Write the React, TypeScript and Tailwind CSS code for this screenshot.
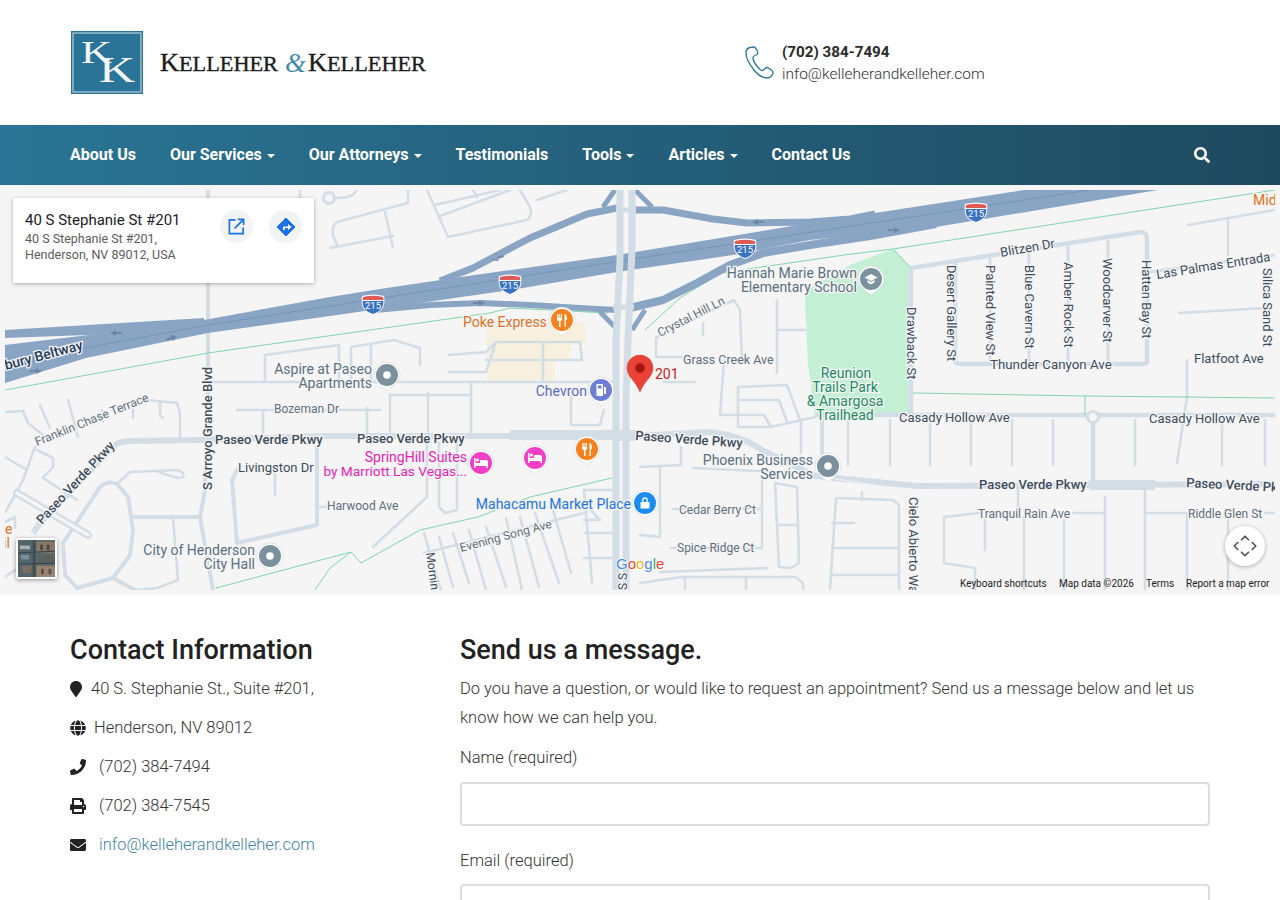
import { ChevronDown, ChevronLeft, ChevronRight, ChevronUp } from 'lucide-react'
import { FaEnvelope, FaGlobe, FaMapMarker, FaPhone, FaPrint, FaSearch } from 'react-icons/fa'

const navItems = [
  { label: 'About Us' },
  { label: 'Our Services', caret: true },
  { label: 'Our Attorneys', caret: true },
  { label: 'Testimonials' },
  { label: 'Tools', caret: true },
  { label: 'Articles', caret: true },
  { label: 'Contact Us' },
]

// minor streets, in page coordinates
const streets = [
  // west of S Arroyo Grande
  'M5 412 L23 411 L28 423 L43 435 M40 405 L50 428 M68 400 L78 437 M102 410 L103 422 M133 403 V418 M147 400 L177 403 L180 413 V438 M160 403 V415 L163 418',
  'M5 457 L27 470 M35 447 L23 480 L5 513 M37 450 L53 458 V467 L43 478 L77 500 M5 522 L15 517 V528',
  'M118 483 L130 472 L177 470 Q185 472 183 477 Q178 480 157 471 M5 577 L15 570',
  'M173 517 L178 580 L157 588 L135 590',
  'M275 473 V495 M317 507 H325',
  // Bozeman and north of Paseo
  'M237 410 H380 M263 410 V433 M367 408 V433',
  'M212 382 H437 L443 382 H612 M265 382 V355 L339 345 V380 M351 380 V347 L394 340 L420 348 V365 M371 345 V380',
  'M449 372 H486 L496 342 H580 L582 360 H486 M449 355 L486 352 L496 342 M543 343 V380',
  'M390 432 V395 H471 M428 393 V433 M471 383 V433',
  'M571 397 V425 H600 L604 410',
  // south of Paseo
  'M427 443 V497 L373 547 M439 443 V507 L445 513 L457 510 V443',
  'M424 553 L584 513 M424 533 L441 590 M439 537 L453 587 M453 533 L469 583 M469 530 L486 590 M486 527 L506 587 M506 518 L522 590 M520 517 L539 587 M535 513 L559 583 M553 510 L571 573 M584 490 L592 583 M584 490 H612 M584 503 L600 520 H584 M585 533 H612 M584 558 H612',
  // north of the highway, top of page
  'M408 190 V203 L337 222 Q332 225 333 235 L337 245 M330 248 L393 236 M385 212 L393 247',
  'M427 190 L448 237 L527 220 Q533 215 530 207 L520 190 M435 205 L500 190 M440 216 L510 190 M473 190 L477 197 M537 200 L567 190 M336 198 C345 198 355 197 356 190 M300 190 L300 225 M225 262 L232 245',
  // east of S Stephanie
  'M656 338 L660 335 L730 302 L734 300 L740 310 L742 360 M656 338 V357 H683 M703 323 V335 M777 300 V373 M777 330 H805 M664 382 H695',
  'M724 360 L720 415 H764 L771 427 L815 417 M738 387 L787 385 L801 423 M738 387 V427 H771 M738 400 H779 L787 422 M801 423 V453',
  'M681 447 V465 L640 467 M693 468 L803 473 M660 467 V537 L640 535 M762 480 V548 H671 M673 509 H762',
  'M775 483 L797 487 L799 563 L791 568 L779 567 Z M777 525 H798',
  'M862 492 V500 M836 498 L893 500 L899 505 V590 M836 498 L830 590 M832 523 H854 M832 548 H899 M832 575 H899',
  'M660 572 L767 568 M640 583 L681 577 H795 L803 583 V590 M685 578 V590 M746 578 V590',
  // residential, east
  'M1018 488 V510 M944 517 L979 513 M944 517 V563 L975 568 V590 M985 520 V550 M1024 517 V590 M1064 520 V590 M1073 513 H1105 M1105 497 V590 M1145 490 V590 M1145 513 H1187 V590 M1228 520 V590 M1265 513 H1275',
  'M848 420 V465 M890 420 V465 M930 420 V465 M971 420 V465 M1012 420 V465 M1053 420 V465 M1135 420 V465 M1222 420 V465 M1265 420 V465',
  'M1187 360 V397 L1177 463 M1179 313 L1265 308 M1188 225 L1275 210 M1228 218 V255',
]

// a few carry more weight
const mainStreets = [
  'M77 588 L65 575 L63 543 L100 487 Q108 480 117 484 L128 497 L133 530 L130 555 L113 578 L77 588 M113 578 L135 590 M133 517 H200',
  'M237 470 L232 480 L237 543 L317 525 V447',
  'M822 420 V453',
  'M208 190 V400 L205 490 L200 517 L213 590',
]

function Pin({ x, y, fill, children }: { x: number; y: number; fill: string; children?: React.ReactNode }) {
  return (
    <g transform={`translate(${x} ${y})`}>
      <path d="M-13 0 A13 13 0 0 1 13 0 C13 7 6 11 0 16 C-6 11 -13 7 -13 0Z" fill="#fff" stroke="#d0d0d0" strokeWidth="0.6" />
      <circle r="11" fill={fill} />
      {children}
    </g>
  )
}

const Fork = () => (
  <path d="M-5 -6 V-1 C-5 1 -3 1 -3 1 V7 H-1.5 V1 C-1.5 1 0 1 0 -1 V-6 H-1 V-2 H-1.7 V-6 H-2.6 V-2 H-3.4 V-6 H-4.2 V-2 H-4.4 V-6Z M2.5 -6 C4.5 -6 5 -3 5 0 H3.8 V7 H2.5Z" fill="#fff" />
)
const Bed = () => (
  <path d="M-7 -5 H-5.5 V0 H-1 V-3 H5 A2 2 0 0 1 7 -1 V5 H5.5 V3 H-5.5 V5 H-7Z M-5 -3 A1.5 1.5 0 1 1 -2 -3 A1.5 1.5 0 1 1 -5 -3Z" fill="#fff" />
)
const Dot = () => <circle r="3.8" fill="#fff" />

function Shield({ x, y }: { x: number; y: number }) {
  return (
    <g transform={`translate(${x} ${y})`}>
      <path d="M-11 -9 Q0 -12 11 -9 C12 -2 12 6 0 10 C-12 6 -12 -2 -11 -9Z" fill="#fff" />
      <path d="M-10 -8 Q0 -10.5 10 -8 L10.3 -5 H-10.3Z" fill="#e05a5a" />
      <path d="M-10.3 -4 H10.3 C10.5 1 9 6 0 9 C-9 6 -10.5 1 -10.3 -4Z" fill="#3a72c4" />
      <text y="4" textAnchor="middle" fontSize="9.5" fill="#fff">215</text>
    </g>
  )
}

type LabelProps = {
  x: number
  y: number
  t: string
  c?: string
  s?: number
  r?: number
  a?: 'start' | 'middle' | 'end'
  w?: number
}

// map label with the usual halo round it
function L({ x, y, t, c = '#5f6f7d', s = 12.5, r = 0, a = 'start', w = 400 }: LabelProps) {
  return (
    <text
      x={x}
      y={y}
      fill={c}
      fontSize={s}
      fontWeight={w}
      textAnchor={a}
      stroke="#f5f5f5"
      strokeWidth="2.5"
      paintOrder="stroke"
      transform={r ? `rotate(${r} ${x} ${y})` : undefined}
    >
      {t}
    </text>
  )
}

function MapDrawing() {
  const road = '#d2dde6'
  const hwy = '#8aa5c4'
  const dark = '#3d4c5c'
  const poi = '#5a7080'
  return (
    <svg viewBox="5 190 1270 400" className="block h-full w-full">
      <rect x="5" y="190" width="1270" height="400" fill="#f5f5f5" />
      <path d="M893 249 L911 268 L911 415 L815 415 L808 365 L805 300 L807 290 L850 265Z" fill="#c3f0d4" />
      <path d="M487 322 H585 V345 H571 V360 H555 V381 H487Z" fill="#f8f0de" />

      <g fill="none" stroke={road} strokeWidth="2.6" strokeLinejoin="round" strokeLinecap="round">
        {streets.map((d, i) => (
          <path key={i} d={d} />
        ))}
      </g>
      <g fill="none" stroke={road} strokeWidth="4" strokeLinejoin="round" strokeLinecap="round">
        {mainStreets.map((d, i) => (
          <path key={i} d={d} />
        ))}
      </g>

      {/* slip road with a cul-de-sac end */}
      <path d="M17 493 L88 535" fill="none" stroke={road} strokeWidth="8" strokeLinecap="round" />
      <path d="M17 493 L88 535" fill="none" stroke="#f5f5f5" strokeWidth="3.5" strokeLinecap="round" />
      <circle cx="329" cy="198" r="5.5" fill="#f5f5f5" stroke={road} strokeWidth="3" />

      {/* wider roads */}
      <g fill="none" stroke={road} strokeWidth="4.5" strokeLinejoin="round">
        <path d="M911 268 V415 M815 415 H1275 M911 268 L1140 232 Q1147 232 1147 240 V362 Q1147 364 1140 364 H960 Q955 364 955 360 V262" />
        <path d="M990 258 V362 M1029 252 V362 M1068 246 V362 M1108 240 V362" strokeWidth="3" />
        <path d="M1093 415 V486" />
        <path d="M1150 272 L1275 255" strokeWidth="3" />
      </g>
      <circle cx="1093" cy="417" r="5.5" fill="#f5f5f5" stroke={road} strokeWidth="3" />
      <path d="M33 533 L40 523 L115 445 Q118 442 130 441 L200 440 L326 436 L636 436 L709 432 Q740 435 762 450 L815 476 L917 486 L1089 485 L1275 484" fill="none" stroke={road} strokeWidth="6" strokeLinejoin="round" />
      <path d="M510 435 H636 M1089 485 H1155" fill="none" stroke={road} strokeWidth="10" />
      <path d="M830 478 L900 489" fill="none" stroke="#f5f5f5" strokeWidth="1" />

      {/* green boundary lines */}
      <g fill="none" stroke="#82d4ab" strokeWidth="1">
        <path d="M5 390 L208 353 L490 313 L510 308 L608 313" />
        <path d="M645 330 L680 298 L721 273 L844 255 L893 249 L1275 190 M893 249 L911 268" />
        <path d="M216 588 L351 552 L361 563 L420 530 L478 517 L530 497 L612 478" />
        <path d="M913 393 L1085 396 L1275 398 M1085 396 V415" />
        <path d="M315 590 L330 568 L351 552" />
      </g>

      {/* interstate 215 */}
      <path
        d="M5 345 L114 332 L204 320 L330 297 L380 289 L447 279 L617 255 L810 223 L1024 190 H1158 L936 227 L810 240 L733 255 L617 272 L523 288 L330 316 L208 333 L86 358 L5 383Z"
        fill={hwy}
      />
      <path d="M5 330 L204 318 V326 L114 334 L5 338Z" fill={hwy} />
      <g fill="none" stroke={hwy} strokeLinejoin="round">
        <path d="M630 308 L663 300 L697 283 L730 265 L763 253 L810 245 L870 236 L936 224" strokeWidth="8" />
        <path d="M440 281 L473 268 L530 238 L587 214 L617 208" strokeWidth="7" />
        <path d="M603 207 L615 190" strokeWidth="5" />
        <path d="M635 210 L663 210 L713 219 L747 223 L810 222 L850 219 L875 214" strokeWidth="7" />
        <path d="M635 190 L652 207" strokeWidth="5" />
        <path d="M375 310 L430 305 L480 303 L530 305 L597 309 L617 310" strokeWidth="6" />
        <path d="M600 312 L615 327" strokeWidth="5" />
        <path d="M632 330 L645 310" strokeWidth="5" />
      </g>
      <path d="M5 363 L208 325 L640 258 L1090 190" fill="none" stroke="#6f8eb0" strokeWidth="0.8" />
      <g fill="#6e87a5">
        <path d="M491 260 l8 -1 -2 -2 6 -2 1 2 -6 2 1 2Z" />
        <path d="M752 222 l6 -3 v2 h6 v2 h-6 v2Z" />
        <path d="M485 303 l-6 -3 v2 h-6 v2 h6 v2Z" />
        <path d="M110 333 l6 -3 v2 h6 v2 h-6 v2Z" />
        <path d="M177 336 l-7 -1 1 2 -5 2 1 2 5 -2 1 2Z" />
        <path d="M42 371 l-6 -3 v2 h-6 v2 h6 v2Z" />
        <path d="M900 230 l-6 -3 v2 h-6 v2 h6 v2Z" />
      </g>

      {/* S Stephanie St */}
      <g fill="none" stroke={road} strokeWidth="7">
        <path d="M620 190 V260 L616 340 V590" />
        <path d="M632 190 V250 L628 340 L626 400 V590" />
        <path d="M616 210 H636 M613 307 H634" strokeWidth="5" />
      </g>
      <path d="M612 436 H636" stroke={road} strokeWidth="10" />

      <Shield x={373} y={305} />
      <Shield x={510} y={285} />
      <Shield x={745} y={249} />
      <Shield x={976} y={213} />

      {/* labels */}
      <L x={6} y={370} t="bury Beltway" c="#1f3a5a" w={500} s={14} r={-15} />
      <L x={212} y={490} t="S Arroyo Grande Blvd" c={dark} w={500} s={13} r={-90} />
      <L x={215} y={444} t="Paseo Verde Pkwy" c={dark} w={500} s={13} />
      <L x={357} y={443} t="Paseo Verde Pkwy" c={dark} w={500} s={13} />
      <L x={635} y={440} t="Paseo Verde Pkwy" c={dark} w={500} s={13} r={4} />
      <L x={979} y={489} t="Paseo Verde Pkwy" c={dark} w={500} s={13} />
      <L x={1186} y={487} t="Paseo Verde Pkwy" c={dark} w={500} s={13} r={3} />
      <L x={42} y={525} t="Paseo Verde Pkwy" c={dark} w={500} s={13} r={-47} />
      <L x={37} y={446} t="Franklin Chase Terrace" s={12} r={-22} />
      <L x={274} y={413} t="Bozeman Dr" s={12} />
      <L x={238} y={472} t="Livingston Dr" c={dark} s={13} />
      <L x={327} y={510} t="Harwood Ave" s={12} />
      <L x={461} y={552} t="Evening Song Ave" s={12} r={-15} />
      <L x={426} y={553} t="Morning" c={dark} s={12} r={82} />
      <L x={683} y={364} t="Grass Creek Ave" s={12.5} />
      <L x={660} y={337} t="Crystal Hill Ln" s={12} r={-27} />
      <L x={907} y={307} t="Drawback St" c={dark} s={13} r={90} />
      <L x={947} y={265} t="Desert Gallery St" c={dark} s={13} r={90} />
      <L x={986} y={265} t="Painted View St" c={dark} s={13} r={90} />
      <L x={1025} y={265} t="Blue Cavern St" c={dark} s={13} r={90} />
      <L x={1064} y={262} t="Amber Rock St" c={dark} s={13} r={90} />
      <L x={1103} y={258} t="Woodcarver St" c={dark} s={13} r={90} />
      <L x={1142} y={260} t="Hatten Bay St" c={dark} s={13} r={90} />
      <L x={1263} y={268} t="Silica Sand St" c={dark} s={13} r={90} />
      <L x={1001} y={257} t="Blitzen Dr" c={dark} s={13} r={-10} />
      <L x={1157} y={279} t="Las Palmas Entrada" c={dark} s={13} r={-9} />
      <L x={990} y={369} t="Thunder Canyon Ave" c={dark} s={13.3} />
      <L x={1194} y={363} t="Flatfoot Ave" c={dark} s={13} />
      <L x={899} y={422} t="Casady Hollow Ave" c={dark} s={13} />
      <L x={1149} y={423} t="Casady Hollow Ave" c={dark} s={13} />
      <L x={679} y={514} t="Cedar Berry Ct" s={12} />
      <L x={677} y={552} t="Spice Ridge Ct" s={12} />
      <L x={978} y={518} t="Tranquil Rain Ave" s={12} />
      <L x={1188} y={518} t="Riddle Glen St" s={12} />
      <L x={909} y={497} t="Cielo Abierto Way" c={dark} s={13} r={90} />
      <L x={627} y={590} t="S S" c={dark} s={12} r={-90} />

      <L x={857} y={278} t="Hannah Marie Brown" a="end" s={14} c={poi} />
      <L x={857} y={292} t="Elementary School" a="end" s={14} c={poi} />
      <L x={372} y={374} t="Aspire at Paseo" a="end" s={14} c={poi} />
      <L x={372} y={388} t="Apartments" a="end" s={14} c={poi} />
      <L x={255} y={555} t="City of Henderson" a="end" s={14} c={poi} />
      <L x={255} y={569} t="City Hall" a="end" s={14} c={poi} />
      <L x={813} y={465} t="Phoenix Business" a="end" s={14} c={poi} />
      <L x={813} y={479} t="Services" a="end" s={14} c={poi} />
      <L x={463} y={327} t="Poke Express" s={14} c="#e0701c" />
      <L x={587} y={396} t="Chevron" a="end" s={14} c="#5c6bc0" />
      <L x={467} y={462} t="SpringHill Suites" a="end" s={14} c="#e91eb0" />
      <L x={467} y={476} t="by Marriott Las Vegas..." a="end" s={13.7} c="#e91eb0" />
      <L x={631} y={509} t="Mahacamu Market Place" a="end" s={14} c="#1a73e8" />
      <L x={846} y={378} t="Reunion" a="middle" s={14} c="#188a60" />
      <L x={845} y={392} t="Trails Park" a="middle" s={14} c="#188a60" />
      <L x={845} y={406} t="& Amargosa" a="middle" s={14} c="#188a60" />
      <L x={845} y={420} t="Trailhead" a="middle" s={14} c="#188a60" />
      <L x={1253} y={205} t="Mid" s={14} c="#e0701c" />
      <L x={5} y={534} t="e" s={14} c="#e0701c" />
      <L x={3} y={548} t="il" s={14} c="#e0701c" />

      {/* pins */}
      <Pin x={562} y={320} fill="#f5821f"><Fork /></Pin>
      <Pin x={587} y={449} fill="#f5821f"><Fork /></Pin>
      <Pin x={387} y={375} fill="#7b919e"><Dot /></Pin>
      <Pin x={828} y={466} fill="#7b919e"><Dot /></Pin>
      <Pin x={270} y={556} fill="#7b919e"><Dot /></Pin>
      <Pin x={871} y={279} fill="#7b919e">
        <path d="M-6.5 -1.5 L0 -5 L6.5 -1.5 L0 2Z M-3.5 1 V3.5 L0 5.5 L3.5 3.5 V1 L0 3Z" fill="#fff" />
      </Pin>
      <Pin x={601} y={390} fill="#6d7ed4">
        <path d="M-4.5 -6 H2 V6 H-4.5Z M3 -3 H5 V4 H3Z" fill="#fff" />
        <rect x="-3" y="-4.5" width="3.5" height="3" fill="#6d7ed4" />
      </Pin>
      <Pin x={481} y={463} fill="#f33fc6"><Bed /></Pin>
      <Pin x={535} y={458} fill="#f33fc6"><Bed /></Pin>
      <Pin x={645} y={503} fill="#1a8cf0">
        <path d="M-4.5 -1 H4.5 V5.5 H-4.5Z M-2.8 -1 V-3 A2.8 2.8 0 0 1 2.8 -3 V-1 H1.5 V-3 A1.5 1.5 0 0 0 -1.5 -3 V-1Z" fill="#fff" />
      </Pin>

      {/* place marker */}
      <path d="M640 392 C636 381 627 377 627 368 A13 13 0 0 1 653 368 C653 377 644 381 640 392Z" fill="#ea4335" stroke="#c5221f" strokeWidth="0.4" />
      <circle cx="640" cy="368" r="4.8" fill="#a5150f" />
      <L x={655} y={379} t="201" s={14} c="#c5221f" />

      {/* google wordmark */}
      <text x="616" y="569" fontSize="15" fontWeight="500" stroke="#fff" strokeWidth="1.5" paintOrder="stroke" fontFamily="'Liberation Sans',sans-serif">
        <tspan fill="#4285f4">G</tspan>
        <tspan fill="#ea4335">o</tspan>
        <tspan fill="#fbbc05">o</tspan>
        <tspan fill="#4285f4">g</tspan>
        <tspan fill="#34a853">l</tspan>
        <tspan fill="#ea4335">e</tspan>
      </text>

      {/* attribution */}
      <g fontSize="10" fill="#222">
        <text x="960" y="587">Keyboard shortcuts</text>
        <text x="1059" y="587">Map data ©2026</text>
        <text x="1146" y="587">Terms</text>
        <text x="1186" y="587">Report a map error</text>
      </g>
    </svg>
  )
}

function SatelliteThumb() {
  return (
    <svg viewBox="0 0 40 40" className="block h-full w-full">
      <rect width="40" height="40" fill="#5d6a68" />
      <rect x="0" y="0" width="16" height="40" fill="#52656b" />
      <rect x="16" y="0" width="3" height="40" fill="#3f4d55" />
      <rect x="20" y="2" width="20" height="12" fill="#8a7766" />
      <rect x="22" y="16" width="18" height="10" fill="#59625c" />
      <rect x="20" y="28" width="20" height="12" fill="#98836e" />
      <rect x="2" y="6" width="11" height="4" fill="#a7b0b3" />
      <rect x="3" y="16" width="9" height="5" fill="#7d8f98" />
      <rect x="4" y="28" width="10" height="8" fill="#7a6d60" />
      <rect x="24" y="5" width="3" height="6" fill="#4b463f" />
      <rect x="31" y="5" width="3" height="6" fill="#4b463f" />
      <rect x="25" y="31" width="3" height="6" fill="#5b5047" />
      <rect x="33" y="31" width="3" height="6" fill="#5b5047" />
      <path d="M0 14 L40 12 M0 26 L40 25" stroke="#38474f" strokeWidth="1.2" />
    </svg>
  )
}

function InfoCard() {
  return (
    <div className="absolute left-[8px] top-[8px] flex h-[85px] w-[301px] justify-between bg-white px-[12px] pt-[12px] shadow-[0_1px_4px_rgba(0,0,0,0.3)]">
      <div>
        <div className="text-[15px] leading-[21px] text-[#202124]">40 S Stephanie St #201</div>
        <div className="text-[12.5px] leading-[16px] text-[#5b5b5b]">
          40 S Stephanie St #201,
          <br />
          Henderson, NV 89012, USA
        </div>
      </div>
      <div className="flex gap-[16px]">
        <button className="flex h-[33px] w-[33px] items-center justify-center rounded-full bg-[#f1f3f4]">
          <svg viewBox="0 0 18 18" className="h-[17px] w-[17px]" fill="none" stroke="#1a73e8" strokeWidth="1.8">
            <path d="M8 2 H1.5 V16.5 H16 V10" />
            <path d="M7 11 L16 2 M10.5 1.5 H16.5 V7.5" />
          </svg>
        </button>
        <button className="flex h-[33px] w-[33px] items-center justify-center rounded-full bg-[#f1f3f4]">
          <svg viewBox="0 0 20 20" className="h-[20px] w-[20px]">
            <path d="M10 1 L19 10 L10 19 L1 10Z" fill="#1a73e8" stroke="#1a73e8" strokeWidth="1" strokeLinejoin="round" />
            <path d="M7 13 V9.5 H12 V7 L15.5 10 L12 13 V11 H8.8 V13Z" fill="#fff" />
          </svg>
        </button>
      </div>
    </div>
  )
}

function PhoneOutline() {
  return (
    <svg viewBox="0 0 29 33" className="h-[33px] w-[29px] shrink-0" fill="none" stroke="#2a7597" strokeWidth="1.3">
      <path d="M5 1.5 C3 2 1 4 1 7 C1 12 5 19 9 24 C13 29 18 32 22 32 C25 32 27 30 28 27 C28.5 25.5 27 24.5 25 23 C23 21.5 21.5 21 20.5 22 L18.5 24 C17.5 25 16 24.5 14.5 23 C11.5 20 8.5 15 8 12.5 C7.8 11 8.5 10 10 9.5 L12 8.5 C13 8 13 7 12.5 5.5 C11.5 3 10 1 8.5 1 C7.5 1 6 1.2 5 1.5Z" />
    </svg>
  )
}

function Logo() {
  return (
    <svg viewBox="0 0 356 63" className="block h-[63px] w-[356px]" fontFamily="'Liberation Serif',serif">
      <rect x="0" y="0" width="72" height="63" fill="#2a7597" />
      <rect x="2" y="2" width="68" height="59" fill="none" stroke="#cfe0e8" strokeWidth="1" />
      <text x="10" y="32" fontSize="32" textLength="31" lengthAdjust="spacingAndGlyphs" fill="#f2f5f6">K</text>
      <text x="28" y="51" fontSize="36" textLength="36" lengthAdjust="spacingAndGlyphs" fill="#f2f5f6">K</text>
      <g fill="#1c1c1c" stroke="#1c1c1c" strokeWidth="0.35">
        <text x="89" y="39.5" fontSize="26" textLength="118" lengthAdjust="spacingAndGlyphs">
          K<tspan fontSize="22">ELLEHER</tspan>
        </text>
        <text x="237" y="39.5" fontSize="26" textLength="118" lengthAdjust="spacingAndGlyphs">
          K<tspan fontSize="22">ELLEHER</tspan>
        </text>
      </g>
      <text x="214" y="41" fontSize="27" fontStyle="italic" fill="#3f8aac">&amp;</text>
    </svg>
  )
}

function Field({ label }: { label: string }) {
  return (
    <div className="mb-[20px]">
      <label className="mb-[9px] block text-[16.5px] font-light leading-[29.6px] text-[#333]">{label}</label>
      <input className="block h-[44px] w-full rounded-[4px] border-2 border-[#ddd] bg-white" />
    </div>
  )
}

export default function App() {
  return (
    <div className="h-[900px] overflow-hidden bg-white font-['Roboto',sans-serif] text-[#333]">
      <header className="flex h-[125px] items-center px-[71px]">
        <Logo />
        <div className="ml-[318px] flex items-center gap-[8px]">
          <PhoneOutline />
          <div className="leading-[22px]">
            <div className="text-[15.2px] font-bold text-[#2b2b2b]">(702) 384-7494</div>
            <div className="text-[15.5px] font-light text-[#333]">info@kelleherandkelleher.com</div>
          </div>
        </div>
      </header>

      <nav className="flex h-[60px] items-center justify-between bg-linear-to-r from-[#2a7595] to-[#1e4a5f] px-[70px] text-white">
        <ul className="flex gap-[34px]">
          {navItems.map((item) => (
            <li key={item.label} className="flex items-center text-[16px] font-bold">
              {item.label}
              {item.caret && (
                <span className="ml-[5px] mt-[2px] h-0 w-0 border-x-[4px] border-t-[4px] border-x-transparent border-t-white" />
              )}
            </li>
          ))}
        </ul>
        <FaSearch className="h-[16px] w-[16px]" />
      </nav>

      <section className="bg-[#f5f5f5] p-[5px]">
        <div className="relative h-[400px] overflow-hidden">
          <MapDrawing />
          <InfoCard />
          <div className="absolute bottom-[11px] left-[11px] h-[41px] w-[41px] rounded-[2px] border-2 border-white shadow-[0_1px_4px_rgba(0,0,0,0.4)]">
            <SatelliteThumb />
          </div>
          <button className="absolute bottom-[24px] right-[10px] h-[40px] w-[40px] rounded-full bg-white text-[#555] shadow-[0_1px_4px_rgba(0,0,0,0.3)]">
            <ChevronUp className="absolute left-[13px] top-[5px] h-[14px] w-[14px]" strokeWidth={3} />
            <ChevronDown className="absolute bottom-[5px] left-[13px] h-[14px] w-[14px]" strokeWidth={3} />
            <ChevronLeft className="absolute left-[4px] top-[13px] h-[14px] w-[14px]" strokeWidth={3} />
            <ChevronRight className="absolute right-[4px] top-[13px] h-[14px] w-[14px]" strokeWidth={3} />
          </button>
        </div>
      </section>

      <main className="grid grid-cols-[390px_750px] px-[70px] pt-[40px]">
        <div>
          <h3 className="mb-[8px] text-[27px] font-medium leading-[31px] text-[#222]">Contact Information</h3>
          <ul className="text-[16.5px] font-light leading-[29px]">
            <li className="mb-[10px] flex items-center gap-[9px]">
              <FaMapMarker className="h-[16px] w-[12px] text-[#222]" />
              40 S. Stephanie St., Suite #201,
            </li>
            <li className="mb-[10px] flex items-center gap-[8px]">
              <FaGlobe className="h-[16px] w-[16px] text-[#222]" />
              Henderson, NV 89012
            </li>
            <li className="mb-[10px] flex items-center gap-[13px]">
              <FaPhone className="h-[16px] w-[16px] text-[#222]" />
              (702) 384-7494
            </li>
            <li className="mb-[10px] flex items-center gap-[13px]">
              <FaPrint className="h-[16px] w-[16px] text-[#222]" />
              (702) 384-7545
            </li>
            <li className="mb-[10px] flex items-center gap-[13px]">
              <FaEnvelope className="h-[16px] w-[16px] text-[#222]" />
              <a className="text-[#3f84a6]">info@kelleherandkelleher.com</a>
            </li>
          </ul>
        </div>
        <div>
          <h3 className="mb-[8px] text-[27px] font-medium leading-[31px] text-[#222]">Send us a message.</h3>
          <p className="mb-[11px] text-[16.5px] font-light leading-[29px]">
            Do you have a question, or would like to request an appointment? Send us a message below and let us know how we can help you.
          </p>
          <Field label="Name (required)" />
          <Field label="Email (required)" />
        </div>
      </main>
    </div>
  )
}
